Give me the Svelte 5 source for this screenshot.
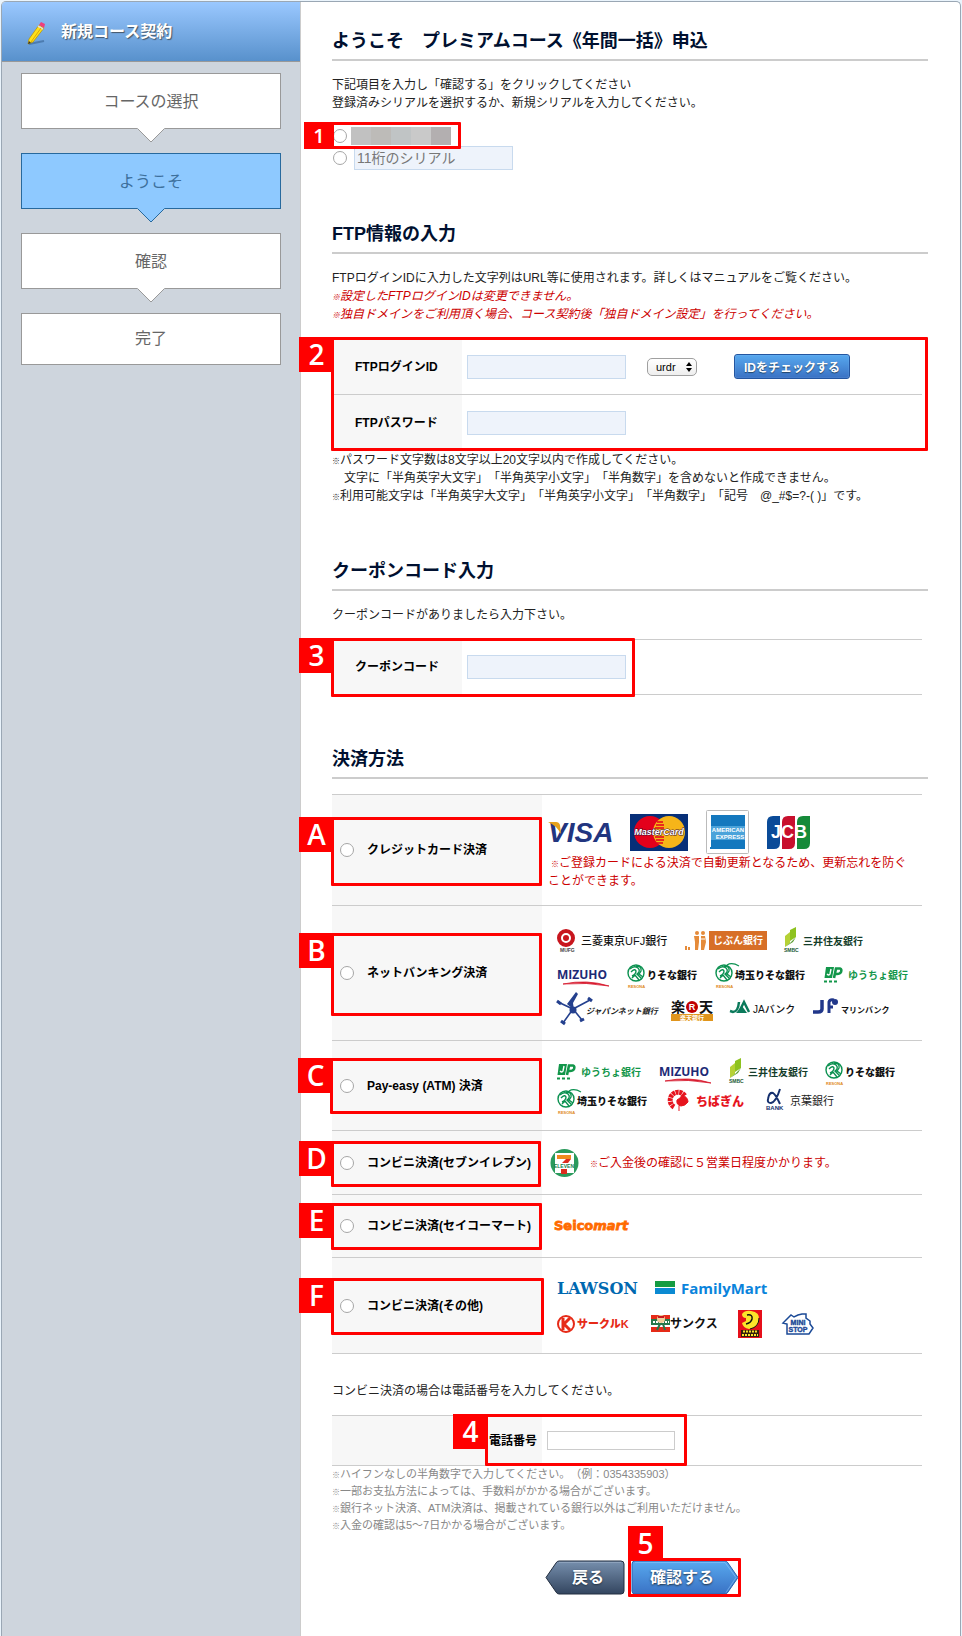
<script lang="ts">
  interface Method {
    id: string;
    mark: string;
    label: string;
    height: number;
    frame: string;
  }

  const steps = ['コースの選択', 'ようこそ', '確認', '完了'];
  const activeStep = 1;

  const mosaic = ['#c1c1c1', '#bdbbb8', '#c0c4c5', '#c9c9c9', '#b3afb0'];

  // frame is the inset of the red marker inside the heading cell
  const methods: Method[] = [
    { id: 'card', mark: 'A', label: 'クレジットカード決済', height: 111, frame: '22px 0 19px -1px' },
    { id: 'netbank', mark: 'B', label: 'ネットバンキング決済', height: 135, frame: '27px 0 24px -1px' },
    { id: 'payeasy', mark: 'C', label: 'Pay-easy (ATM) 決済', height: 90, frame: '17px 0 16px -2px' },
    { id: 'seven', mark: 'D', label: 'コンビニ決済(セブンイレブン)', height: 64, frame: '10px 1px 7px -1px' },
    { id: 'seico', mark: 'E', label: 'コンビニ決済(セイコーマート)', height: 63, frame: '8px 0 7px -1px' },
    { id: 'other', mark: 'F', label: 'コンビニ決済(その他)', height: 96, frame: '20px -2px 18px -1px' }
  ];

  let serialType = $state('');
  let serial = $state('');
  let ftpId = $state('');
  let ftpPassword = $state('');
  let server = $state('urdr');
  let coupon = $state('');
  let method = $state('');
  let tel = $state('');
</script>

{#snippet mizuho()}
  <svg class="logo humanist" width="53" height="28" viewBox="0 0 53 28" role="img" aria-label="みずほ銀行">
    <text x="0" y="16" font-size="12" font-weight="bold" fill="#1d2a75">MIZUHO</text>
    <path d="M6 21 Q30 16 52 23 Q30 19 6 21Z" fill="#d7192d" stroke="#d7192d" stroke-width="0.8" />
  </svg>
{/snippet}

{#snippet resonaMark()}
  <circle cx="9" cy="10" r="8" fill="#fff" stroke="#0b9150" stroke-width="1.4" />
  <path d="M3 6 Q7 2 11 5 Q14 8 10 11 L15 16 M4 9 Q8 5 9 8 Q9 11 5 13 M5 15 L8 12 L12 17 M9 3 Q15 3 14 8 Q13 10 12 11 L16 14" fill="none" stroke="#0b9150" stroke-width="1.4" />
  <text x="1" y="25" font-size="4" font-weight="bold" fill="#e08a1c">RESONA</text>
{/snippet}

{#snippet resona()}
  <svg class="logo" width="71" height="28" viewBox="0 0 71 28" role="img" aria-label="りそな銀行">
    {@render resonaMark()}
    <text x="20" y="16" font-size="10" font-weight="900" fill="#111">りそな銀行</text>
  </svg>
{/snippet}

{#snippet saitama()}
  <svg class="logo" width="92" height="28" viewBox="0 0 92 28" role="img" aria-label="埼玉りそな銀行">
    {@render resonaMark()}
    <path d="M12 2 Q17 -1 24 3" fill="none" stroke="#0b9150" stroke-width="1.2" />
    <text x="20" y="16" font-size="10" font-weight="900" fill="#111">埼玉りそな銀行</text>
  </svg>
{/snippet}

{#snippet yucho()}
  <svg class="logo" width="85" height="28" viewBox="0 0 85 28" role="img" aria-label="ゆうちょ銀行">
    <path d="M2 4H10L8 15H0.5Z" fill="#12964a" />
    <path d="M7 6 L6 11 Q5 13 3 11" fill="none" stroke="#fff" stroke-width="1.4" />
    <path d="M10 15 L12 5.5 H16 Q18 6 17 9 Q16 11 13 11 H11" fill="none" stroke="#12964a" stroke-width="2.6" />
    <path d="M0 18.5H15" stroke="#12964a" stroke-width="2" stroke-dasharray="3 2" />
    <text x="24" y="16" font-size="10" font-weight="bold" fill="#12964a">ゆうちょ銀行</text>
  </svg>
{/snippet}

{#snippet smbc()}
  <svg class="logo" width="79" height="28" viewBox="0 0 79 28" role="img" aria-label="三井住友銀行">
    <path d="M1 7 L6 3 V14 L1 18Z" fill="#b5d135" />
    <path d="M6 1 L12 -2 V8 L6 12Z" fill="#8dc21f" />
    <path d="M1 18 L6 14 L12 8 L9 13Z" fill="#5b9e34" />
    <text x="0" y="23" font-size="5" font-weight="bold" fill="#1c5a38">SMBC</text>
    <text x="19" y="16" font-size="10" font-weight="bold" fill="#143d2a">三井住友銀行</text>
  </svg>
{/snippet}

{#snippet cardLogos()}
  <div class="cards">
    <svg class="logo" width="64" height="44" viewBox="0 0 64 44" role="img" aria-label="VISA">
      <text x="0" y="32" font-size="28" font-weight="bold" font-style="italic" fill="#22357f">VISA</text>
      <path d="M0 12 H8 Q11 12 12 15 L13 24 Q8 15 0 12Z" fill="#e5a11c" />
    </svg>
    <svg class="logo" width="58" height="44" viewBox="0 0 58 44" role="img" aria-label="MasterCard">
      <rect y="4" width="58" height="37" fill="#072f78" />
      <circle cx="20" cy="22" r="16" fill="#e3001b" />
      <circle cx="39" cy="22" r="16" fill="#f6b519" />
      <path d="M27 12H33M26 15H34M25 18H34M25 27H34M26 30H34M27 33H33" stroke="#e3001b" stroke-width="1.5" />
      <text x="29" y="25" font-size="9" font-weight="bold" font-style="italic" text-anchor="middle" fill="#fff" stroke="#3d1233" stroke-width="1" paint-order="stroke">MasterCard</text>
    </svg>
    <svg class="logo" width="43" height="44" viewBox="0 0 43 44" role="img" aria-label="American Express">
      <rect x="0.5" y="0.5" width="42" height="43" rx="1" fill="#fff" stroke="#bbb" />
      <rect x="5" y="5" width="34" height="34" fill="#1478be" />
      <path d="M4 38H6" stroke="#1478be" stroke-width="2" />
      <rect x="5" y="16" width="34" height="14" fill="#4ba3da" />
      <text x="22" y="22" font-size="6" font-weight="bold" text-anchor="middle" fill="#fff">AMERICAN</text>
      <text x="24" y="29" font-size="6" font-weight="bold" text-anchor="middle" fill="#fff">EXPRESS</text>
    </svg>
    <svg class="logo" width="43" height="44" viewBox="0 0 43 44" role="img" aria-label="JCB">
      <path d="M6 6H13V33Q13 39 7 39H0V12Q0 6 6 6Z" fill="#0a4b98" />
      <path d="M21 6H28V33Q28 39 22 39H15V12Q15 6 21 6Z" fill="#c8102e" />
      <path d="M36 6H43V33Q43 39 37 39H30V12Q30 6 36 6Z" fill="#168a3a" />
      <text x="22" y="28" font-size="18" font-weight="bold" text-anchor="middle" fill="#fff">JCB</text>
    </svg>
  </div>
{/snippet}

{#snippet netbankLogos()}
  <div class="logos wide">
    <div class="logo-row">
      <svg class="logo" width="111" height="28" viewBox="0 0 111 28" role="img" aria-label="三菱東京UFJ銀行">
        <circle cx="9" cy="9" r="7" fill="none" stroke="#c8161e" stroke-width="4" />
        <circle cx="9" cy="9" r="3" fill="#c8161e" />
        <text x="3" y="23" font-size="5" font-weight="bold" fill="#444">MUFG</text>
        <text x="24" y="16" font-size="11" font-weight="500" fill="#111">三菱東京UFJ銀行</text>
      </svg>
      <svg class="logo" width="82" height="28" viewBox="0 0 82 28" role="img" aria-label="じぶん銀行">
        <path d="M1 17V21M4 18V21" stroke="#e58b3a" stroke-width="2" />
        <g fill="#e58b3a">
          <circle cx="12" cy="4" r="2" />
          <path d="M9 7H14V13L13 21H10V13Z" />
          <circle cx="18" cy="4" r="2" />
          <path d="M16 7H20L21 13L19 21H16Z" />
        </g>
        <path d="M14 10H20" stroke="#fff" />
        <rect x="24" y="2" width="58" height="19" fill="#d76f27" />
        <text x="53" y="15" font-size="10" font-weight="bold" text-anchor="middle" fill="#fff">じぶん銀行</text>
      </svg>
      {@render smbc()}
    </div>
    <div class="logo-row">
      {@render mizuho()}
      {@render resona()}
      {@render saitama()}
      {@render yucho()}
    </div>
    <div class="logo-row">
      <svg class="logo" width="97" height="28" viewBox="0 0 97 28" role="img" aria-label="ジャパンネット銀行">
        <path d="M1 5 L16 12 L33 3 M16 12 L6 26 M16 12 L25 23" fill="none" stroke="#24408e" stroke-width="1.6" />
        <path d="M17 13 L10 7 L19 -5 L21 -3 L16 6Z" fill="#24408e" />
        <circle cx="16" cy="13" r="3.5" fill="#24408e" />
        <path d="M0 4L4 7M31 1L35 4M4 24L8 27M23 24L27 22" stroke="#24408e" stroke-width="3" />
        <text x="29" y="17" font-size="8" font-weight="bold" font-style="italic" fill="#222">ジャパンネット銀行</text>
      </svg>
      <svg class="logo" width="42" height="28" viewBox="0 0 42 28" role="img" aria-label="楽天銀行">
        <text x="0" y="15" font-size="14" font-weight="bold" fill="#111">楽</text>
        <circle cx="21" cy="10" r="6" fill="#bf0000" />
        <text x="21" y="13" font-size="9" font-weight="bold" text-anchor="middle" fill="#fff">R</text>
        <text x="28" y="15" font-size="14" font-weight="bold" fill="#111">天</text>
        <rect y="17" width="42" height="7" fill="#e0951c" />
        <text x="21" y="23" font-size="6" font-weight="bold" text-anchor="middle" fill="#fff">楽天銀行</text>
      </svg>
      <svg class="logo" width="66" height="28" viewBox="0 0 66 28" role="img" aria-label="JAバンク">
        <path d="M0 14L3 15Q8 15 9 5 M9 15L14 5L19 15" fill="none" stroke="#0b7a5b" stroke-width="2.5" />
        <path d="M6 16H17L12 9Z" fill="#0b7a5b" />
        <text x="23" y="16" font-size="10" font-weight="500" fill="#111">JAバンク</text>
      </svg>
      <svg class="logo" width="78" height="28" viewBox="0 0 78 28" role="img" aria-label="JFマリンバンク">
        <path d="M9 3V12Q9 15 5 15H0" fill="none" stroke="#21378a" stroke-width="3.5" />
        <path d="M16 16V5Q17 2 21 3M15 10H20" fill="none" stroke="#21378a" stroke-width="3" />
        <circle cx="22" cy="5" r="3" fill="#21378a" />
        <text x="28" y="16" font-size="8" font-weight="bold" fill="#111">マリンバンク</text>
      </svg>
    </div>
  </div>
{/snippet}

{#snippet payeasyLogos()}
  <div class="logos">
    <div class="logo-row">
      {@render yucho()}
      {@render mizuho()}
      {@render smbc()}
      {@render resona()}
    </div>
    <div class="logo-row">
      {@render saitama()}
      <svg class="logo" width="83" height="28" viewBox="0 0 83 28" role="img" aria-label="ちばぎん">
        <path d="M8 18A8 8 0 1 1 19 7" fill="none" stroke="#e6141e" stroke-width="5" stroke-dasharray="3 0.6" />
        <path d="M11 11Q15 9 16 6Q22 8 22 13Q19 17 15 17Q10 16 11 11ZM13 17V22" fill="#e6141e" stroke="#e6141e" />
        <text x="30" y="17" font-size="12" font-weight="900" fill="#e6141e">ちばぎん</text>
      </svg>
      <svg class="logo" width="69" height="28" viewBox="0 0 69 28" role="img" aria-label="京葉銀行">
        <path d="M14 0Q10 13 5 14Q1 14 2 10Q3 3 7 4Q10 6 14 15" fill="none" stroke="#16306e" stroke-width="2" />
        <text x="0" y="21" font-size="6" font-weight="bold" fill="#16306e">BANK</text>
        <text x="24" y="16" font-size="11" fill="#222">京葉銀行</text>
      </svg>
    </div>
  </div>
{/snippet}

{#snippet sevenLogo()}
  <div class="with-note">
    <svg class="logo" width="29" height="28" viewBox="0 0 29 28" role="img" aria-label="セブンイレブン">
      <circle cx="14.5" cy="14" r="14" fill="#2a9a5c" />
      <path d="M5 4H24V24H5Z" fill="#fff" />
      <path d="M7 6H21V10H7Z" fill="#f08a1e" />
      <path d="M16 10H21L18 14H12Z" fill="#dd2c1e" />
      <path d="M11 20H17V25H11Z" fill="#dd2c1e" />
      <text x="14" y="19" font-size="5" font-weight="bold" text-anchor="middle" fill="#168048">ELEVEN</text>
    </svg>
    <p class="alert"><span class="mark">※</span>ご入金後の確認に５営業日程度かかります。</p>
  </div>
{/snippet}

{#snippet seicoLogo()}
  <svg class="logo seico" width="74" height="28" viewBox="0 0 74 28" role="img" aria-label="Seicomart">
    <text x="0" y="18" font-size="13" font-weight="bold" fill="#ff6a00" stroke="#ff6a00" stroke-width="0.8">Seico<tspan font-style="italic">mart</tspan></text>
  </svg>
{/snippet}

{#snippet otherLogos()}
  <div class="logos wide shops">
    <div class="logo-row">
      <svg class="logo slab" width="78" height="28" viewBox="0 0 78 28" role="img" aria-label="LAWSON">
        <text x="0" y="18" font-size="16" font-weight="bold" fill="#0068b0">LAWSON</text>
      </svg>
      <svg class="logo humanist" width="113" height="28" viewBox="0 0 113 28" role="img" aria-label="FamilyMart">
        <rect y="5" width="20" height="6" fill="#159c42" />
        <rect y="12" width="20" height="6" fill="#0b8ad2" />
        <text x="26" y="18" font-size="15" font-weight="bold" fill="#0a84dc">FamilyMart</text>
      </svg>
    </div>
    <div class="logo-row">
      <svg class="logo" width="74" height="28" viewBox="0 0 74 28" role="img" aria-label="サークルK">
        <circle cx="9" cy="14" r="8" fill="#fff" stroke="#e62a17" stroke-width="2" />
        <path d="M6 8V20M13 8L7 14L13 20" fill="none" stroke="#e62a17" stroke-width="3" />
        <text x="20" y="18" font-size="11" font-weight="900" fill="#e62a17">サークルK</text>
      </svg>
      <svg class="logo" width="67" height="28" viewBox="0 0 67 28" role="img" aria-label="サンクス">
        <path d="M0 5H19V9H0Z" fill="#e62a17" />
        <path d="M0 9H19V15H0Z" fill="#26784a" />
        <path d="M2 12H18" stroke="#fff" stroke-width="2" stroke-dasharray="2 1" />
        <path d="M0 17H19V22H0Z" fill="#e62a17" />
        <circle cx="10" cy="9" r="4" fill="#f0cf9a" />
        <path d="M7 7H13" stroke="#c8161e" stroke-width="2" />
        <path d="M6 20L9 14H12L14 20" fill="none" stroke="#26784a" stroke-width="2" />
        <text x="19" y="18" font-size="12" font-weight="bold" fill="#111">サンクス</text>
      </svg>
      <svg class="logo" width="24" height="28" viewBox="0 0 24 28" role="img" aria-label="デイリーヤマザキ">
        <rect width="24" height="28" fill="#e60f1a" />
        <path d="M4 4Q7 0 13 1Q22 2 21 10Q20 18 11 19Q5 18 4 13L8 11L8 8Q4 8 4 4Z" fill="#fbe42a" />
        <path d="M9 5Q15 4 14 9Q13 13 8 14" fill="none" stroke="#111" stroke-width="1.5" />
        <path d="M21 8Q21 17 12 19" fill="none" stroke="#111" />
        <rect x="3" y="20" width="18" height="7" fill="#33200c" />
        <path d="M5 21.5H19M4 25H20" stroke="#fbe42a" stroke-width="2" stroke-dasharray="2 1" />
      </svg>
      <svg class="logo" width="32" height="28" viewBox="0 0 32 28" role="img" aria-label="MINI STOP">
        <path d="M5 24V14L1 13L9 5L12 7L16 5L20 4L24 4V8L28 11V14L31 18L27 24H5Z" fill="#fff" stroke="#1b4a97" stroke-width="1.5" />
        <text x="16" y="15" font-size="7" font-weight="bold" text-anchor="middle" fill="#1b4a97" stroke="#1b4a97" stroke-width="0.4">MINI</text>
        <text x="16" y="22" font-size="7" font-weight="bold" text-anchor="middle" fill="#1b4a97" stroke="#1b4a97" stroke-width="0.4">STOP</text>
      </svg>
    </div>
  </div>
{/snippet}

<div class="panel">
  <aside>
    <header>
      <svg class="pencil" width="20" height="24" viewBox="0 0 20 24" aria-hidden="true">
        <path d="M2 22L17 19" stroke="#3f6c9e" stroke-width="2" opacity="0.7" />
        <path d="M12 3L17 6L6 20L1 22L2 17Z" fill="#ffe11a" stroke="#b58f00" stroke-width="0.7" />
        <path d="M12 3L14 0L18 2L17 6Z" fill="#ee3f7c" />
        <path d="M11 4L16 7" stroke="#ddd" stroke-width="1.5" />
        <path d="M14 6L4 20" stroke="#e0a800" />
        <path d="M1 22L2 19L4 21Z" fill="#333" />
      </svg>
      <span>新規コース契約</span>
    </header>
    <ol>
      {#each steps as step, i}
        <li class:active={i === activeStep} class:last={i === steps.length - 1}>
          {step}
          {#if i < steps.length - 1}
            <svg class="arrow" width="28" height="15" viewBox="0 0 28 15" aria-hidden="true">
              <path d="M0 0H28L14 14Z" />
              <polyline points="0.5,0.5 14,14 27.5,0.5" />
            </svg>
          {/if}
        </li>
      {/each}
    </ol>
  </aside>

  <main>
    <section>
      <h2>ようこそ　プレミアムコース《年間一括》申込</h2>
      <p>下記項目を入力し「確認する」をクリックしてください<br />登録済みシリアルを選択するか、新規シリアルを入力してください。</p>
      <div class="serial saved">
        <input type="radio" value="saved" bind:group={serialType} aria-label="登録済みシリアル" />
        <span class="mosaic">
          {#each mosaic as color}
            <i style:background={color}></i>
          {/each}
        </span>
        <span class="frame f1"><b class="badge small">1</b></span>
      </div>
      <div class="serial new">
        <input type="radio" value="new" bind:group={serialType} aria-label="新規シリアル" />
        <input class="field" type="text" placeholder="11桁のシリアル" bind:value={serial} aria-label="新規シリアル番号" />
      </div>
    </section>

    <section>
      <h2>FTP情報の入力</h2>
      <p>
        FTPログインIDに入力した文字列はURL等に使用されます。詳しくはマニュアルをご覧ください。<br />
        <em><span class="mark">※</span>設定したFTPログインIDは変更できません。<br />
        <span class="mark">※</span>独自ドメインをご利用頂く場合、コース契約後「独自ドメイン設定」を行ってください。</em>
      </p>
      <div class="table-wrap">
        <table>
          <tbody>
            <tr class="ftp">
              <th scope="row"><label for="ftp-id">FTPログインID</label></th>
              <td>
                <div class="controls">
                  <input id="ftp-id" class="field" type="text" bind:value={ftpId} />
                  <span class="select">
                    <select bind:value={server} aria-label="サーバー">
                      <option>urdr</option>
                    </select>
                    <svg width="6" height="10" viewBox="0 0 6 10" aria-hidden="true">
                      <path d="M3 0L6 4H0ZM0 6H6L3 10Z" />
                    </svg>
                  </span>
                  <button type="button" class="check">IDをチェックする</button>
                </div>
              </td>
            </tr>
            <tr class="ftp">
              <th scope="row"><label for="ftp-pass">FTPパスワード</label></th>
              <td><input id="ftp-pass" class="field" type="password" bind:value={ftpPassword} /></td>
            </tr>
          </tbody>
        </table>
        <span class="frame f2"><b class="badge">2</b></span>
      </div>
      <p class="rules">
        <span class="mark">※</span>パスワード文字数は8文字以上20文字以内で作成してください。<br />
        　文字に「半角英字大文字」「半角英字小文字」「半角数字」を含めないと作成できません。<br />
        <span class="mark">※</span>利用可能文字は「半角英字大文字」「半角英字小文字」「半角数字」「記号　@_#$=?-( )」です。
      </p>
    </section>

    <section>
      <h2>クーポンコード入力</h2>
      <p>クーポンコードがありましたら入力下さい。</p>
      <div class="table-wrap">
        <table>
          <tbody>
            <tr class="coupon">
              <th scope="row"><label for="coupon">クーポンコード</label></th>
              <td><input id="coupon" class="field" type="text" bind:value={coupon} /></td>
            </tr>
          </tbody>
        </table>
        <span class="frame f3"><b class="badge">3</b></span>
      </div>
    </section>

    <section>
      <h2>決済方法</h2>
      <div class="table-wrap methods">
        <table>
          <tbody>
            {#each methods as m}
              <tr style:height="{m.height}px">
                <th scope="row">
                  <label class="method">
                    <input type="radio" value={m.id} bind:group={method} />
                    {m.label}
                  </label>
                  <span class="frame" style:inset={m.frame}><b class="badge">{m.mark}</b></span>
                </th>
                <td>
                  {#if m.id === 'card'}
                    {@render cardLogos()}
                    <p class="alert indent"><span class="mark">※</span>ご登録カードによる決済で自動更新となるため、更新忘れを防ぐことができます。</p>
                  {:else if m.id === 'netbank'}
                    {@render netbankLogos()}
                  {:else if m.id === 'payeasy'}
                    {@render payeasyLogos()}
                  {:else if m.id === 'seven'}
                    {@render sevenLogo()}
                  {:else if m.id === 'seico'}
                    {@render seicoLogo()}
                  {:else}
                    {@render otherLogos()}
                  {/if}
                </td>
              </tr>
            {/each}
          </tbody>
        </table>
      </div>

      <p class="tel-lead">コンビニ決済の場合は電話番号を入力してください。</p>
      <div class="table-wrap">
        <table>
          <tbody>
            <tr class="tel">
              <th scope="row"><label for="tel">電話番号</label></th>
              <td><input id="tel" class="plain" type="tel" bind:value={tel} /></td>
            </tr>
          </tbody>
        </table>
        <span class="frame f4"><b class="badge">4</b></span>
      </div>
      <p class="notes">
        <span class="mark">※</span>ハイフンなしの半角数字で入力してください。（例：0354335903）<br />
        <span class="mark">※</span>一部お支払方法によっては、手数料がかかる場合がございます。<br />
        <span class="mark">※</span>銀行ネット決済、ATM決済は、掲載されている銀行以外はご利用いただけません。<br />
        <span class="mark">※</span>入金の確認は5〜7日かかる場合がございます。
      </p>
    </section>

    <div class="actions">
      <button type="button" class="nav back">
        <svg width="80" height="35" viewBox="0 0 80 35" aria-hidden="true">
          <defs>
            <linearGradient id="back-fill" x1="0" y1="0" x2="0" y2="1">
              <stop offset="0" stop-color="#7790ae" />
              <stop offset="1" stop-color="#33455f" />
            </linearGradient>
          </defs>
          <path d="M14 1H76Q79 1 79 4V31Q79 34 76 34H14Q12 34 11 32L1 17.5L11 3Q12 1 14 1Z" fill="url(#back-fill)" stroke="#222e40" />
          <path d="M14 2.5H76" stroke="#9fb2ca" opacity="0.6" />
        </svg>
        <span>戻る</span>
      </button>
      <div class="confirm">
        <button type="button" class="nav next">
          <svg width="108" height="35" viewBox="0 0 108 35" aria-hidden="true">
            <defs>
              <linearGradient id="next-fill" x1="0" y1="0" x2="0" y2="1">
                <stop offset="0" stop-color="#58a9ef" />
                <stop offset="1" stop-color="#3a72c4" />
              </linearGradient>
            </defs>
            <path d="M4 1H94Q96 1 97 3L107 17.5L97 32Q96 34 94 34H4Q1 34 1 31V4Q1 1 4 1Z" fill="url(#next-fill)" stroke="#2a62b0" />
            <path d="M4 2.5H94L105 17.5L95 32.5" fill="none" stroke="#8cc6fa" opacity="0.6" />
          </svg>
          <span>確認する</span>
        </button>
        <span class="frame f5"><b class="badge above">5</b></span>
      </div>
    </div>
  </main>
</div>

<style>
  :global(body) {
    margin: 0;
    background: #eaf4fc;
  }

  .panel,
  .panel * {
    box-sizing: border-box;
  }

  .panel {
    display: flex;
    margin: 1px 1px 0;
    border: 1px solid #9aa7b4;
    border-bottom: 0;
    border-radius: 5px 5px 0 0;
    background: #fff;
    color: #222;
    font-family: 'Liberation Sans', 'Noto Sans CJK JP', sans-serif;
    font-size: 12px;
    line-height: 18px;
    text-spacing-trim: space-all;
    overflow: hidden;
  }

  input,
  select,
  button {
    margin: 0;
    font-family: inherit;
  }

  aside {
    flex: 0 0 299px;
    border-right: 1px solid #ccc;
    background: #ced5dd;
  }

  header {
    display: flex;
    align-items: center;
    gap: 14px;
    height: 60px;
    padding: 0 25px;
    border-bottom: 1px solid #999;
    background: linear-gradient(#9ac8ff, #5891cc);
    color: #fff;
    font-size: 16px;
    font-weight: bold;
    text-shadow: 1px 1px 1px #456;
  }

  .pencil {
    margin-top: 4px;
  }

  ol {
    display: flex;
    flex-direction: column;
    gap: 24px;
    margin: 11px 0 0;
    padding: 0 19px;
    list-style: none;
  }

  li {
    position: relative;
    display: flex;
    align-items: center;
    justify-content: center;
    height: 56px;
    padding-top: 2px;
    border: 1px solid #999;
    background: #fff;
    color: #666;
    font-size: 16px;
  }

  li.last {
    height: 52px;
    padding-top: 0;
  }

  li.active {
    border-color: #27699d;
    background: #8ec9ff;
    color: #3d709c;
  }

  .arrow {
    position: absolute;
    top: 100%;
    left: 50%;
    margin-left: -14px;
    fill: #fff;
    stroke: none;
  }

  .arrow polyline {
    fill: none;
    stroke: #999;
  }

  .active .arrow {
    fill: #8ec9ff;
  }

  .active .arrow polyline {
    stroke: #27699d;
  }

  main {
    flex: 1;
    min-width: 0;
    padding: 27px 32px 42px 31px;
  }

  section + section {
    margin-top: 52px;
  }

  h2 {
    margin: 0 0 15px;
    padding-bottom: 6px;
    border-bottom: 2px solid #ccc;
    color: #001030;
    font-size: 18px;
    line-height: 24px;
  }

  p {
    margin: 0;
  }

  em,
  .alert {
    color: #c00;
  }

  .mark {
    font-size: 8px;
    font-weight: bold;
    line-height: 1;
  }

  .indent {
    text-indent: 3px;
  }

  .serial {
    position: relative;
    display: flex;
    align-items: center;
    padding-left: 1px;
  }

  .saved {
    gap: 4px;
    height: 20px;
    margin-top: 14px;
  }

  .new {
    gap: 7px;
  }

  .mosaic {
    display: flex;
  }

  .mosaic i {
    width: 20px;
    height: 18px;
  }

  input[type='radio'] {
    appearance: none;
    flex: none;
    width: 14px;
    height: 14px;
    border: 1px solid #a6a6a6;
    border-radius: 50%;
    background: #fff;
  }

  input[type='radio']:checked {
    border: 4px solid #3a76c8;
  }

  .field,
  .plain {
    display: block;
    height: 24px;
    padding: 0 2px;
    border: 1px solid #c8daee;
    border-radius: 0;
    background: #eef3fb;
    width: 159px;
    font-size: 14px;
  }

  .field::placeholder {
    color: #777;
  }

  .plain {
    width: 128px;
    height: 19px;
    border-color: #ccc;
    background: #fff;
  }

  .table-wrap {
    position: relative;
    margin: 15px 6px 0 0;
  }

  table {
    width: 100%;
    border-bottom: 1px solid #ccc;
    border-spacing: 0;
    table-layout: fixed;
  }

  th,
  td {
    border-top: 1px solid #ccc;
    text-align: left;
    vertical-align: middle;
  }

  th {
    position: relative;
    width: 130px;
    padding: 0 0 0 23px;
    background: #f7f7f7;
    color: #000;
  }

  td {
    padding: 0 0 0 5px;
  }

  .ftp {
    height: 56px;
  }

  .coupon {
    height: 55px;
  }

  .tel {
    height: 50px;
  }

  .methods th,
  .tel th {
    width: 210px;
  }

  .methods th {
    padding-left: 8px;
  }

  .methods td {
    padding: 0 8px 0 6px;
  }

  .tel th {
    padding-right: 5px;
    text-align: right;
  }

  .method {
    display: flex;
    align-items: center;
    gap: 13px;
    white-space: nowrap;
  }

  .controls {
    display: flex;
    align-items: center;
  }

  .select {
    position: relative;
    margin: 0 37px 0 21px;
  }

  .select svg {
    position: absolute;
    top: 4px;
    right: 5px;
    pointer-events: none;
  }

  select {
    display: block;
    appearance: none;
    width: 50px;
    height: 18px;
    padding: 0 0 0 8px;
    border: 1px solid #a0a0a0;
    border-radius: 5px;
    background: linear-gradient(#fff, #eee);
    color: #000;
    font-size: 11px;
    line-height: 16px;
  }

  .check {
    height: 25px;
    padding: 0 9px;
    border: 1px solid #2456a0;
    border-radius: 3px;
    background: linear-gradient(#57a8ee, #3a72c4);
    box-shadow: inset 0 0 1px #a8d2ff;
    color: #fff;
    font-size: 12px;
    font-weight: bold;
    text-shadow: 0 1px 1px #246;
    white-space: nowrap;
  }

  .rules {
    margin-bottom: 54px;
  }

  .tel-lead {
    margin-top: 28px;
  }

  .notes {
    color: #888;
    font-size: 11px;
    line-height: 17px;
  }

  .cards {
    display: flex;
    gap: 18px;
  }

  .logos {
    display: flex;
    flex-direction: column;
    gap: 1px;
    padding: 6px 0 0 9px;
  }

  .logos.wide {
    gap: 6px;
    padding-top: 8px;
  }

  .logos.shops {
    padding-top: 2px;
  }

  .logo-row {
    display: flex;
    gap: 17px;
  }

  .shops .logo-row {
    gap: 20px;
  }

  .logo {
    display: block;
    flex: none;
    overflow: visible;
  }

  .seico {
    margin-left: 6px;
    font-family: 'DejaVu Sans', sans-serif;
  }

  .slab {
    font-family: 'DejaVu Serif', serif;
  }

  .humanist {
    font-family: 'Open Sans', sans-serif;
  }

  .with-note {
    display: flex;
    align-items: center;
    gap: 11px;
    padding-left: 2px;
  }

  /* red numbered markers laid over the form */
  .frame {
    position: absolute;
    z-index: 2;
    border: 3px solid #f00;
    border-radius: 1px;
    pointer-events: none;
  }

  .badge {
    position: absolute;
    top: -3px;
    right: 100%;
    width: 35px;
    height: 35px;
    background: #f00;
    color: #fff;
    font-family: 'Open Sans', sans-serif;
    font-size: 28px;
    font-weight: 600;
    line-height: 34px;
    text-align: center;
  }

  .badge.small {
    width: 30px;
    height: 27px;
    font-size: 20px;
    line-height: 27px;
  }

  .badge.above {
    top: auto;
    right: auto;
    bottom: 100%;
    left: -3px;
  }

  .f1 {
    top: -4px;
    left: -1px;
    width: 130px;
    height: 27px;
  }

  .f2 {
    inset: -1px -6px 0 -1px;
  }

  .f3 {
    inset: -1px auto -2px -1px;
    width: 304px;
  }

  .f4 {
    inset: -1px auto 0 153px;
    width: 202px;
  }

  .f5 {
    inset: -2px -2px -2px -3px;
  }

  .actions {
    display: flex;
    justify-content: center;
    gap: 6px;
    margin-top: 26px;
    padding-left: 24px;
  }

  .confirm {
    position: relative;
  }

  .nav {
    display: grid;
    place-items: center;
    padding: 0;
    border: 0;
    background: none;
    color: #fff;
    font-size: 16px;
    font-weight: bold;
    line-height: 34px;
    text-shadow: 0 1px 2px #234;
  }

  .nav > * {
    grid-area: 1 / 1;
  }

  .back span {
    padding-left: 6px;
  }

  .next span {
    padding-right: 6px;
  }
</style>
